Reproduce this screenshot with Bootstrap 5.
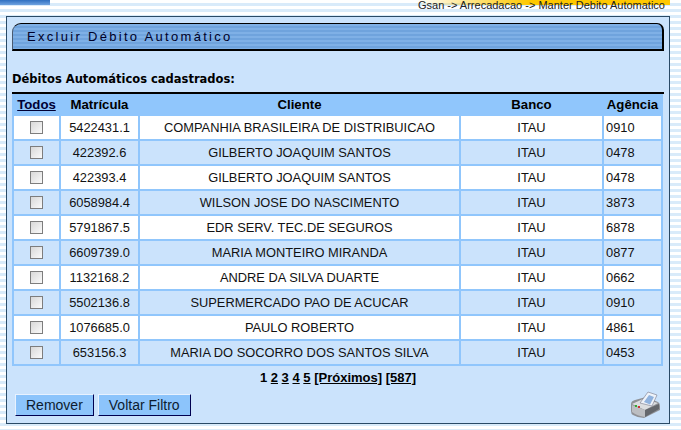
<!DOCTYPE html>
<html lang="pt-BR">
<head>
  <meta charset="UTF-8" />
  <title>Excluir Débito Automático</title>
  <link href="https://cdn.jsdelivr.net/npm/bootstrap@5.3.2/dist/css/bootstrap.min.css" rel="stylesheet">
  <style>
    html, body { height: 430px; overflow: hidden; }
    body {
      font-family: "Liberation Sans", Arial, sans-serif;
      font-size: 12.85px;
      color: #000;
      background: repeating-linear-gradient(#fff 0, #fff 3px, #d9ebfa 3px, #d9ebfa 6px);
    }
    .top-strip { height: 16px; }
    .top-blue { width: 50px; height: 5px; background: linear-gradient(#2f6fc0, #6fa2e0); }
    .crumb {
      font-size: 11px; line-height: 11px; height: 11px; padding: 0 16px 0 0; color: #222; width: 631px;
      background: linear-gradient(to right, transparent 0, transparent 58%, #ffc800 76%, #ffc800 98.3%, transparent 98.3%) no-repeat 0 0 / 100% 5px;
    }
    .main-box {
      margin: 0 11px 0 6px; height: 408px; padding: 6px 5px 0 5px;
      background: #cbe3fc; border: 1px solid #2a4a66;
    }
    .title-bar {
      height: 28px; padding-left: 14px; line-height: 25px;
      font-size: 13px; letter-spacing: 2.3px; color: #000028;
      border: 1px solid #000; border-left-color: #4a5a70; border-bottom-width: 2px; border-right-width: 2px;
      border-radius: 9px 7px 0 0;
      background: repeating-linear-gradient(#7fb0e6 0, #7fb0e6 2px, #6fa3dd 2px, #6fa3dd 4px);
    }
    .list-title { font-family: "DejaVu Sans", sans-serif; font-size: 11.5px; font-weight: 700; line-height: 14px; margin: 21px 0 6px; }
    .grid-wrap { border-top: 2px solid #000; }
    .deb-table { width: 651px; table-layout: fixed; border-collapse: separate; border-spacing: 2px; background: #90c6fc; margin: 0; }
    .deb-table th, .deb-table td { padding: 0; text-align: center; vertical-align: middle; height: 23px; color: #111; }
    .deb-table th { height: 18px; background: #90c6fc; color: #000; font-size: 13.2px; line-height: 16px; }
    .deb-table th u { color: #000033; }
    .deb-table tr.odd td { background: #fff; }
    .deb-table tr.even td { background: #cbe3fc; }
    .deb-table td.agc { text-align: left; padding-left: 2px; }
    .box-check { display: block; margin: 0 auto; width: 13px; height: 13px; background: linear-gradient(135deg, #d8d8d8, #fafafa); border: 1px solid #7d7d7d; }
    .pager { text-align: center; font-size: 13px; font-weight: 700; line-height: 14px; margin-top: 5px; }
    .pager a { color: #000; }
    .form-foot { margin-top: 6px; padding: 0 3px; }
    .act-btn {
      font: 14px/20px "Liberation Sans", Arial, sans-serif; color: #0c1c30; height: 22px; padding: 0 10px;
      background: #8cc4fb; border: 1px solid #000050; border-top-color: #e8f2ff; border-left-color: #e8f2ff; border-radius: 0;
    }
  </style>
</head>
<body>
  <div class="top-strip d-flex">
    <div class="top-blue"></div>
    <div class="crumb text-end">Gsan -&gt; Arrecadacao -&gt; Manter Debito Automatico</div>
  </div>
  <div class="main-box">
    <div class="title-bar">Excluir Débito Automático</div>
    <p class="list-title">Débitos Automáticos cadastrados:</p>
    <div class="grid-wrap">
      <table class="deb-table">
        <colgroup><col style="width:45px"><col style="width:77px"><col><col style="width:141px"><col style="width:57px"></colgroup>
        <thead>
          <tr><th><u>Todos</u></th><th>Matrícula</th><th>Cliente</th><th>Banco</th><th>Agência</th></tr>
        </thead>
        <tbody id="rows"></tbody>
      </table>
    </div>
    <div class="pager">1 <a href="#">2</a> <a href="#">3</a> <a href="#">4</a> <a href="#">5</a> <a href="#">[Próximos]</a> <a href="#">[587]</a></div>
    <div class="form-foot d-flex align-items-center gap-1">
      <button type="button" class="act-btn">Remover</button>
      <button type="button" class="act-btn">Voltar Filtro</button>
      <svg class="ms-auto" width="31" height="28" viewBox="0 0 31 28">
        <path d="M1 13 Q1 10 5 9 L16 6 L28 11 Q30 12 30 15 L30 19 L14 27 Q8 27 3 24 Q1 23 1 20 Z" fill="#8f9196"/>
        <path d="M2 13 L13 8 L28 12 L15 19 Z" fill="#dcdee0"/>
        <path d="M15 19 L29 13 L29 18 L15 26 Z" fill="#64676c"/>
        <path d="M2 14 L15 19 L15 26 Q7 25 2 21 Z" fill="#bcbec2"/>
        <path d="M10 12 L18 1 L27 4 L22 15 Z" fill="#eef3fa" stroke="#778" stroke-width=".6"/>
        <path d="M14 11 L19 4 L24 6 L20 13.500 Z" fill="#8fb2de"/>
        <rect x="5" y="14" width="2" height="2" fill="#3a3"/><rect x="8" y="15" width="2" height="2" fill="#c33"/>
      </svg>
    </div>
  </div>
  <script>
    const rows = [
      ['5422431.1', 'COMPANHIA BRASILEIRA DE DISTRIBUICAO', '0910'],
      ['422392.6', 'GILBERTO JOAQUIM SANTOS', '0478'],
      ['422393.4', 'GILBERTO JOAQUIM SANTOS', '0478'],
      ['6058984.4', 'WILSON JOSE DO NASCIMENTO', '3873'],
      ['5791867.5', 'EDR SERV. TEC.DE SEGUROS', '6878'],
      ['6609739.0', 'MARIA MONTEIRO MIRANDA', '0877'],
      ['1132168.2', 'ANDRE DA SILVA DUARTE', '0662'],
      ['5502136.8', 'SUPERMERCADO PAO DE ACUCAR', '0910'],
      ['1076685.0', 'PAULO ROBERTO', '4861'],
      ['653156.3', 'MARIA DO SOCORRO DOS SANTOS SILVA', '0453']
    ];
    document.getElementById('rows').innerHTML = rows.map((r, i) => `
      <tr class="${i % 2 ? 'even' : 'odd'}">
        <td><span class="box-check"></span></td>
        <td>${r[0]}</td>
        <td>${r[1]}</td>
        <td>ITAU</td>
        <td class="agc">${r[2]}</td>
      </tr>`).join('');
  </script>
  <script src="https://cdn.jsdelivr.net/npm/bootstrap@5.3.2/dist/js/bootstrap.bundle.min.js"></script>
</body>
</html>
